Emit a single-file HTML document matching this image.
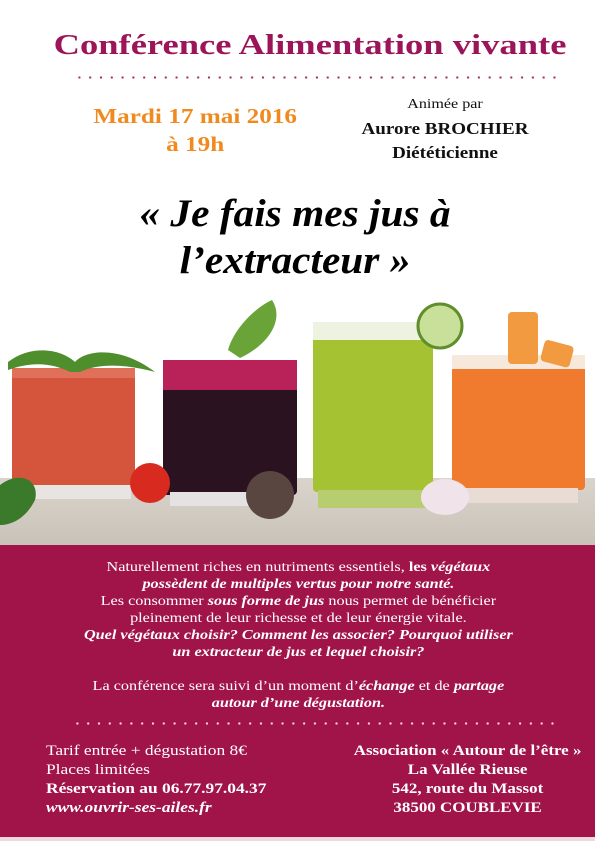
<!DOCTYPE html>
<html><head><meta charset="utf-8"><style>
body{margin:0;width:595px;height:841px;position:relative;background:#fff;font-family:"Liberation Serif",serif;overflow:hidden}
.a{position:absolute;white-space:nowrap}
.c{text-align:center}
.dots{position:absolute;height:3px;background-size:10.8px 3px;background-repeat:repeat-x}
</style></head><body>
<div class="a" style="left:0;width:620px;top:29px;font-size:29px;font-weight:bold;color:#9c1558;text-align:center;transform:scaleX(1.26);transform-origin:310px 0">Conférence Alimentation vivante</div>
<div class="dots" style="left:74px;width:484px;top:76px;background-image:radial-gradient(circle,#a03060 1px,transparent 1.3px)"></div>
<div class="a c" style="left:60px;width:270px;top:102px;font-size:21px;font-weight:bold;color:#f08a1e;line-height:28px;transform:scaleX(1.2);transform-origin:134px 0">Mardi 17 mai 2016<br>à 19h</div>
<div class="a c" style="left:345px;width:200px;top:96px;font-size:14px;color:#111;line-height:17px;transform:scaleX(1.15);transform-origin:100px 0">Animée par</div>
<div class="a c" style="left:345px;width:200px;top:117px;font-size:17px;font-weight:bold;color:#111;line-height:24px;transform:scaleX(1.12);transform-origin:100px 0">Aurore BROCHIER<br>Diététicienne</div>
<div class="a c" style="left:0;width:590px;top:190px;font-size:39px;font-weight:bold;font-style:italic;color:#000;line-height:47px;transform:scaleX(1.06);transform-origin:295px 0">« Je fais mes jus à<br>l’extracteur »</div>
<svg class="a" style="left:0;top:290px" width="595" height="256" viewBox="0 290 595 256">
<defs><linearGradient id="tb" x1="0" y1="0" x2="0" y2="1"><stop offset="0" stop-color="#d9d4cc"/><stop offset="1" stop-color="#c9c2b8"/></linearGradient></defs>
<rect x="0" y="478" width="595" height="68" fill="url(#tb)"/>
<rect x="12" y="372" width="123" height="115" rx="4" fill="#d4553c"/>
<rect x="12" y="368" width="123" height="10" fill="#e0705a"/>
<rect x="16" y="485" width="115" height="14" fill="#e8e4e2"/>
<path d="M8 362 C30 345 60 348 75 362 C85 350 120 345 155 372 C130 365 100 362 80 372 L70 372 C50 362 30 362 8 370Z" fill="#4f8e2c"/>
<rect x="163" y="360" width="134" height="135" rx="4" fill="#2a1220"/>
<rect x="163" y="360" width="134" height="30" fill="#b82258"/>
<rect x="170" y="492" width="122" height="14" fill="#e4e2e2"/>
<path d="M228 350 C235 325 260 305 272 300 C285 320 268 345 240 358Z" fill="#6aa338"/>
<rect x="313" y="322" width="120" height="170" rx="4" fill="#a4c232"/>
<rect x="313" y="322" width="120" height="18" fill="#eef2e0"/>
<rect x="318" y="490" width="110" height="18" fill="#b8cc70"/>
<circle cx="440" cy="326" r="22" fill="#c9e09a" stroke="#5f8e2c" stroke-width="3"/>
<rect x="452" y="360" width="133" height="130" rx="4" fill="#f07a2e"/>
<rect x="452" y="355" width="133" height="14" fill="#f7e8dc"/>
<rect x="458" y="488" width="120" height="15" fill="#e8dcd4"/>
<rect x="508" y="312" width="30" height="52" rx="4" fill="#f29a40"/>
<rect x="543" y="342" width="30" height="22" rx="4" fill="#f29a40" transform="rotate(15 555 350)"/>
<circle cx="150" cy="483" r="20" fill="#d92a20"/>
<circle cx="270" cy="495" r="24" fill="#5a4640"/>
<ellipse cx="445" cy="497" rx="24" ry="18" fill="#f0e4ea"/>
<path d="M0 485 C20 470 40 480 35 500 C25 520 10 525 0 525Z" fill="#3a7a2a"/>
</svg>
<div class="a" style="left:0;top:545px;width:595px;height:296px;background:#a0144a"></div>
<div class="a" style="left:0;top:837px;width:595px;height:4px;background:#f0d8e0"></div>
<div class="a c" style="left:0;width:598px;top:558px;font-size:13.5px;line-height:17px;color:#fff;transform:scaleX(1.2);transform-origin:302px 0">Naturellement riches en nutriments essentiels, <b>les <i>végétaux</i></b><br><b><i>possèdent de multiples vertus pour notre santé.</i></b><br>Les consommer <b><i>sous forme de jus</i></b> nous permet de bénéficier<br>pleinement de leur richesse et de leur énergie vitale.<br><b><i>Quel végétaux choisir? Comment les associer? Pourquoi utiliser<br>un extracteur de jus et lequel choisir?</i></b><br><br>La conférence sera suivi d’un moment d’<b><i>échange</i></b> et de <b><i>partage</i></b><br><b><i>autour d’une dégustation.</i></b></div>
<div class="dots" style="left:72px;width:486px;top:722px;background-image:radial-gradient(circle,#f4dde6 1px,transparent 1.3px)"></div>
<div class="a" style="left:46px;top:742px;font-size:15px;line-height:19px;color:#fff;transform:scaleX(1.16);transform-origin:0 0">Tarif entrée + dégustation 8€<br>Places limitées<br><b>Réservation au 06.77.97.04.37</b><br><b><i>www.ouvrir-ses-ailes.fr</i></b></div>
<div class="a c" style="left:345px;width:245px;top:742px;font-size:15px;line-height:19px;color:#fff;font-weight:bold;transform:scaleX(1.13);transform-origin:122px 0">Association « Autour de l’être »<br>La Vallée Rieuse<br>542, route du Massot<br>38500 COUBLEVIE</div>
</body></html>
